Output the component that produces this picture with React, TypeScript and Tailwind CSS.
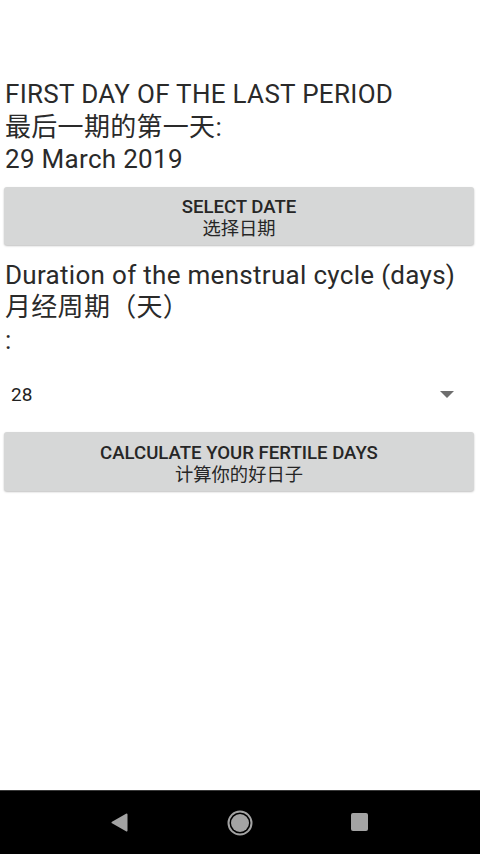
import React from "react";

const FONT = { fontFamily: 'Roboto, "Noto Sans CJK SC", sans-serif' };

export default function App() {
  return (
    <div className="w-[480px] h-[854px] bg-white flex flex-col overflow-hidden" style={FONT}>
      <div className="flex-1 flex flex-col pt-[78px]">
        <div className="px-[5px] text-[26px] leading-[32.5px] tracking-[0.3px] text-[#2a2a2a]">
          <div>FIRST DAY OF THE LAST PERIOD</div>
          <div>最后一期的第一天:</div>
          <div>29 March 2019</div>
        </div>
        <div className="mt-[11px] ml-[4px] w-[470px] h-[58px] pt-[5px] rounded-[3px] bg-[#d6d7d7] shadow-[0_1px_2px_rgba(0,0,0,0.25)] flex flex-col items-center justify-center text-[#262626]">
          <div className="text-[18.6px] leading-[21px] font-medium">SELECT DATE</div>
          <div className="text-[18.3px] leading-[22px]">选择日期</div>
        </div>
        <div className="mt-[14px] px-[5px] text-[26px] leading-[32.5px] tracking-[0.3px] text-[#2a2a2a]">
          <div>Duration of the menstrual cycle (days)</div>
          <div>月经周期（天）</div>
          <div>:</div>
        </div>
        <div className="h-[76px] flex items-center pl-[11px] pr-[26px] text-[#222]">
          <span className="flex-1 text-[19px] leading-[22px] mt-[2px]">28</span>
          <svg width="14" height="7" viewBox="0 0 14 7">
            <path d="M0 0 L14 0 L7 7 Z" fill="#6e6e6e" />
          </svg>
        </div>
        <div className="ml-[4px] w-[470px] h-[59px] pt-[5px] rounded-[3px] bg-[#d6d7d7] shadow-[0_1px_2px_rgba(0,0,0,0.25)] flex flex-col items-center justify-center text-[#262626]">
          <div className="text-[18.6px] leading-[21px] font-medium">CALCULATE YOUR FERTILE DAYS</div>
          <div className="text-[18.3px] leading-[22px]">计算你的好日子</div>
        </div>
      </div>
      <div className="h-[64px] bg-black flex items-center border-t border-[#3a3a3a]">
        <div className="relative w-full h-full">
          <svg className="absolute left-[111px] top-[22px]" width="17" height="19" viewBox="0 0 17 19">
            <path d="M15.5 1.5 L1.5 9.5 L15.5 17.5 Z" fill="#a3a3a3" stroke="#a3a3a3" strokeWidth="2" strokeLinejoin="round" />
          </svg>
          <svg className="absolute left-[227px] top-[19px]" width="26" height="26" viewBox="0 0 26 26">
            <circle cx="13" cy="13" r="11.5" fill="none" stroke="#a3a3a3" strokeWidth="2" />
            <circle cx="13" cy="13" r="9" fill="#a3a3a3" />
          </svg>
          <div className="absolute left-[351px] top-[22px] w-[17px] h-[18px] rounded-[2px] bg-[#a3a3a3]" />
        </div>
      </div>
    </div>
  );
}
